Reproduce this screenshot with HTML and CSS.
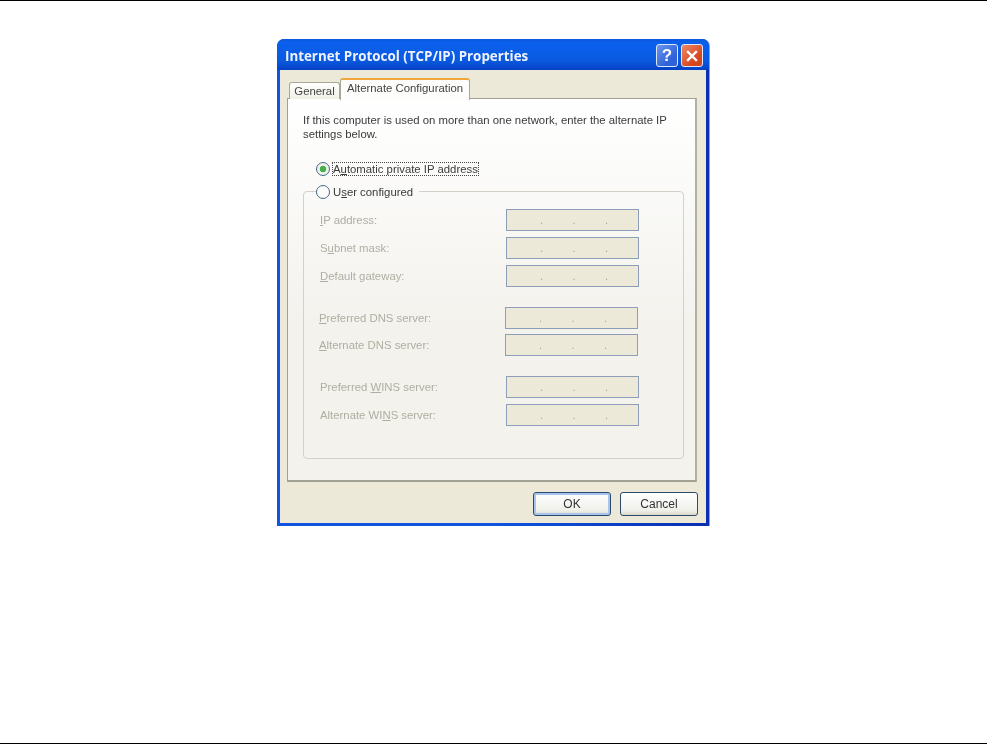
FILE: index.html
```html
<!DOCTYPE html>
<html lang="en">
<head>
<meta charset="utf-8">
<title>Internet Protocol (TCP/IP) Properties</title>
<link rel="stylesheet" href="styles.css">
</head>
<body>
<div class="page">
  <section class="dialog">
    <header class="titlebar">
      <h1 class="title">Internet Protocol (TCP/IP) Properties</h1>
      <div class="controls">
        <span class="ctl ctl-help">?</span>
        <span class="ctl ctl-close">
          <svg width="14" height="14" viewBox="0 0 14 14"><path d="M3 3 L11 11 M11 3 L3 11" stroke="#fff" stroke-width="2.4" stroke-linecap="square" fill="none"/></svg>
        </span>
      </div>
    </header>
    <div class="body">
      <div class="tabs">
        <span class="tab">General</span>
        <span class="tab tab-active">Alternate Configuration</span>
      </div>
      <div class="panel">
        <p class="intro">If this computer is used on more than one network, enter the alternate IP settings below.</p>
        <div class="radio-row">
          <span class="radio radio-on"></span>
          <span class="radio-label focus">A<u>u</u>tomatic private IP address</span>
        </div>
        <fieldset class="group">
          <legend class="group-legend">
            <span class="radio"></span>
            <span class="radio-label">U<u>s</u>er configured</span>
          </legend>
          <div class="rows">
            <div class="row"><span class="lbl"><u>I</u>P address:</span><span class="field"><i>.</i><i>.</i><i>.</i></span></div>
            <div class="row"><span class="lbl">S<u>u</u>bnet mask:</span><span class="field"><i>.</i><i>.</i><i>.</i></span></div>
            <div class="row"><span class="lbl"><u>D</u>efault gateway:</span><span class="field"><i>.</i><i>.</i><i>.</i></span></div>
          </div>
          <div class="rows rows-dns">
            <div class="row"><span class="lbl"><u>P</u>referred DNS server:</span><span class="field"><i>.</i><i>.</i><i>.</i></span></div>
            <div class="row"><span class="lbl"><u>A</u>lternate DNS server:</span><span class="field"><i>.</i><i>.</i><i>.</i></span></div>
          </div>
          <div class="rows rows-wins">
            <div class="row"><span class="lbl">Preferred <u>W</u>INS server:</span><span class="field"><i>.</i><i>.</i><i>.</i></span></div>
            <div class="row"><span class="lbl">Alternate WI<u>N</u>S server:</span><span class="field"><i>.</i><i>.</i><i>.</i></span></div>
          </div>
        </fieldset>
      </div>
      <footer class="footer">
        <button class="btn btn-default" type="button">OK</button>
        <button class="btn" type="button">Cancel</button>
      </footer>
    </div>
  </section>
</div>
</body>
</html>
```
FILE: styles.css
```css
* { box-sizing: border-box; }
html, body { margin: 0; padding: 0; background: #fff; }
.page {
  width: 987px;
  height: 744px;
  border-top: 1px solid #000;
  border-bottom: 1px solid #000;
  padding: 38px 0 0 277px;
  font-family: "Liberation Sans", Arial, sans-serif;
  font-size: 11.35px;
  color: #3a3a3a;
}
.dialog {
  width: 432px;
  height: 487px;
  border-radius: 7px 7px 0 0;
  background: linear-gradient(90deg, #0f55e0 0, #0f55e0 50%, #0a2fb0 100%);
  display: flex;
  flex-direction: column;
  box-shadow: 1px 0 0 #9aa0b4;
  filter: blur(0.35px);
}
.titlebar {
  height: 31px;
  border-radius: 7px 7px 0 0;
  background: linear-gradient(#0c58dc 0, #0a60ec 12%, #0a5ae0 70%, #0440c4 100%);
  display: flex;
  align-items: center;
  justify-content: space-between;
  padding: 2px 6px 0 8px;
}
.title {
  margin: 0;
  font-family: "Open Sans", sans-serif;
  font-size: 13.35px;
  font-weight: bold;
  color: #eef3ff;
  white-space: nowrap;
}
.controls { display: flex; gap: 3px; }
.ctl {
  width: 22px;
  height: 23px;
  border: 1px solid #dfe8fa;
  border-radius: 3px;
  display: flex;
  align-items: center;
  justify-content: center;
  color: #fff;
}
.ctl-help {
  background: linear-gradient(135deg, #6c96ee, #2f62d8 70%);
  font: bold 17px "Liberation Sans", sans-serif;
}
.ctl-close { background: linear-gradient(135deg, #ec8a68, #d8461f 70%); }
.body {
  flex: 1;
  margin: 0 3px 3px;
  padding: 8px 9px 0 7px;
  background: #ece9d8;
  display: flex;
  flex-direction: column;
}
.tabs {
  display: flex;
  align-items: flex-end;
  height: 21px;
  padding-left: 2px;
  position: relative;
  z-index: 1;
  margin-bottom: -1px;
}
.tab {
  height: 17px;
  width: 51px;
  border: 1px solid #a8a898;
  border-bottom: 0;
  border-radius: 3px 3px 0 0;
  background: linear-gradient(#fff, #f0efe6);
  text-align: center;
  line-height: 16px;
  color: #444;
}
.tab-active {
  height: 22px;
  width: 130px;
  margin-bottom: -1px;
  border-color: #a8a898;
  border-top: 2px solid #f0a63c;
  background: #fdfdfb;
  line-height: 17px;
}
.panel {
  height: 384px;
  border: 1px solid #a2a294;
  border-right: 2px solid #b0b0a4;
  border-bottom: 2px solid #a2a294;
  background: linear-gradient(#fff, #f3f2ed 60%);
  padding: 14px 12px 0 15px;
}
.intro { margin: 0; width: 372px; line-height: 14px; }
.radio-row {
  display: flex;
  align-items: center;
  gap: 3px;
  margin: 20px 0 0 13px;
  height: 15px;
}
.radio {
  display: inline-block;
  flex: none;
  width: 14px;
  height: 14px;
  border: 1px solid #47688a;
  border-radius: 50%;
  background: #fbfbf8;
}
.radio-on {
  background: radial-gradient(circle, #48b048 0, #48b048 3px, #eef2ea 3.6px);
}
.radio-label { white-space: nowrap; }
.focus { outline: 1px dotted #444; outline-offset: 0; }
.group {
  margin: 8px 0 0;
  padding: 0 0 0 16px;
  width: 381px;
  height: 275px;
  border: 1px solid #d4d2c8;
  border-radius: 4px;
  min-width: 0;
}
.group-legend {
  display: flex;
  align-items: center;
  gap: 3px;
  padding: 0 6px 0 0;
  margin-left: -4px;
  height: 15px;
}
.rows { display: flex; flex-direction: column; gap: 6px; margin-top: 10px; }
.rows-dns { margin: 20px 0 0 -1px; gap: 5px; }
.rows-dns .row { padding-right: 45px; }
.rows-wins { margin-top: 20px; }
.row { display: flex; align-items: center; justify-content: space-between; height: 22px; padding-right: 44px; }
.lbl { color: #b0aea2; white-space: nowrap; }
.field {
  width: 133px;
  height: 22px;
  border: 1px solid #8e9db8;
  background: #ece9d8;
  display: flex;
  gap: 30.5px;
  padding-left: 33px;
  color: #aca899;
  line-height: 20px;
}
.field i { font-style: normal; width: 2px; }
.footer {
  display: flex;
  justify-content: flex-end;
  gap: 9px;
  padding-top: 10px;
  margin-right: -1px;
}
.btn {
  width: 78px;
  height: 24px;
  padding: 0;
  border: 1px solid #2a4a6c;
  border-radius: 3px;
  background: linear-gradient(#fff, #f0f0ea 80%, #dcd8c8);
  font: 12px "Liberation Sans", Arial, sans-serif;
  color: #333;
}
.btn-default {
  box-shadow: inset 0 0 0 2px #a8c4ee;
}
```
